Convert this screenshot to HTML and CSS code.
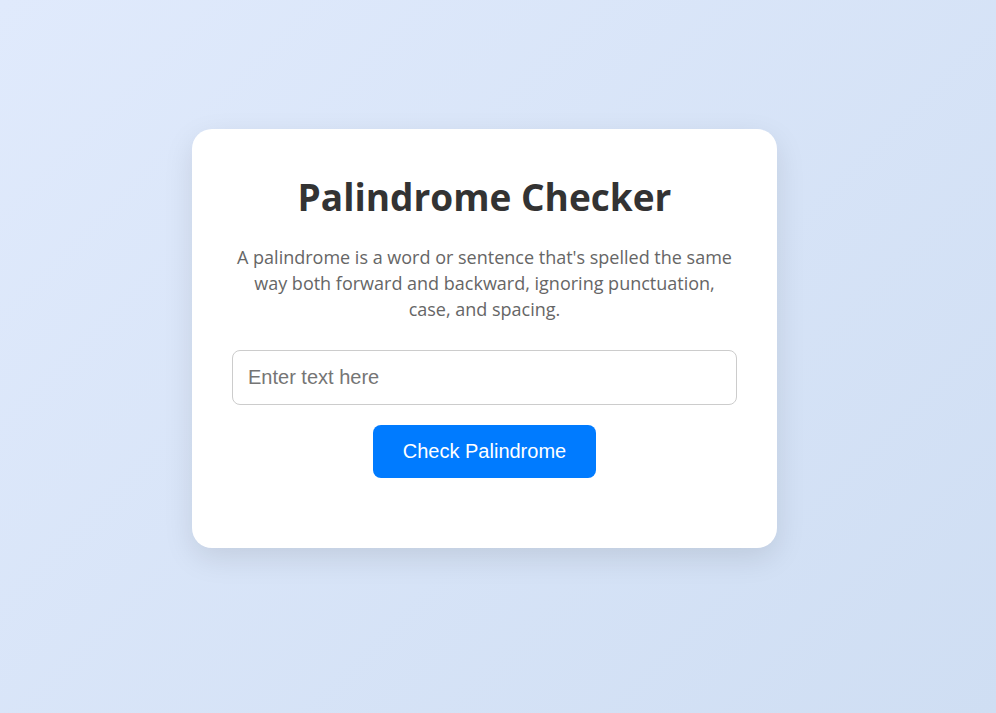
FILE: index.html
```html
<!DOCTYPE html>
<html lang="en">
<head>
<meta charset="utf-8">
<title>Palindrome Checker</title>
<link rel="stylesheet" href="styles.css">
</head>
<body>
<main class="card">
  <h1 class="title">Palindrome Checker</h1>
  <p class="intro">A palindrome is a word or sentence that's spelled the same way both forward and backward, ignoring punctuation, case, and spacing.</p>
  <input class="text-input" type="text" placeholder="Enter text here">
  <button class="check-btn" type="button">Check Palindrome</button>
  <div class="result"></div>
</main>
</body>
</html>
```
FILE: styles.css
```css
* { box-sizing: border-box; }
html, body { height: 100%; }
body {
  margin: 0;
  padding: 0 27px 36px 0;
  display: flex;
  align-items: center;
  justify-content: center;
  background: linear-gradient(135deg, #e0eafc 0%, #cfdef3 100%);
  font-family: "Open Sans", "Noto Sans", sans-serif;
}
.card {
  width: 585px;
  background: #fff;
  border-radius: 20px;
  padding: 44px 40px 40px;
  box-shadow: 0 10px 30px rgba(0, 0, 0, 0.1);
  display: flex;
  flex-direction: column;
  align-items: center;
  text-align: center;
}
.title {
  margin: 0 0 23px;
  font-size: 37px;
  line-height: 48px;
  font-weight: 700;
  color: #333;
}
.intro {
  margin: 0 0 28px;
  font-size: 18px;
  line-height: 26px;
  color: #666;
}
.text-input {
  width: 100%;
  padding: 15px;
  font-family: "Liberation Sans", Arial, sans-serif;
  font-size: 20px;
  line-height: 23px;
  border: 1px solid #ccc;
  border-radius: 8px;
  color: #333;
  outline: none;
}
.text-input::placeholder { color: #757575; }
.check-btn {
  margin-top: 20px;
  padding: 15px 30px;
  font-family: "Liberation Sans", Arial, sans-serif;
  font-size: 20px;
  line-height: 23px;
  color: #fff;
  background: #007bff;
  border: none;
  border-radius: 8px;
  cursor: pointer;
}
.result {
  margin-top: 30px;
  min-height: 0;
}
```
